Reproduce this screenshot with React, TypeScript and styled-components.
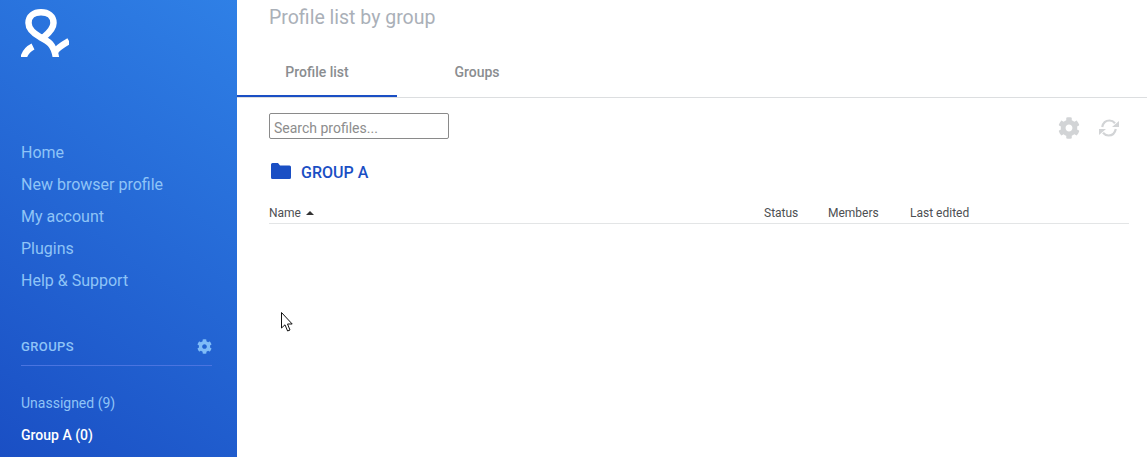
import React from 'react'
import styled, { createGlobalStyle } from 'styled-components'
import { FaCog } from 'react-icons/fa'

const GlobalStyle = createGlobalStyle`
html, body {
    margin: 0;
    height: 100%;
    overflow: hidden;
    background: #fff;
    font-family: Roboto, "Liberation Sans", sans-serif;
}
#root { height: 100%; }
`

const Page = styled.div`
position: relative;
display: flex;
width: 1147px;
height: 457px;
overflow: hidden;
`

const Sidebar = styled.aside`
width: 237px;
flex-shrink: 0;
display: flex;
flex-direction: column;
padding: 9px 25px 0 21px;
box-sizing: border-box;
background: linear-gradient(35deg, #1a4fc4 0%, #2f80e6 100%);
`

const LogoWrap = styled.div`
height: 48px;
margin-bottom: 80px;
svg { display: block; }
`

const NavLink = styled.a`
display: block;
height: 32px;
line-height: 32px;
font-size: 16px;
color: #8fc4f7;
`

const GroupsHead = styled.div`
display: flex;
justify-content: space-between;
align-items: center;
margin-top: 33px;
height: 32px;
padding-bottom: 3px;
border-bottom: 1px solid #4a74e0;
font-size: 13px;
letter-spacing: 0.4px;
font-weight: 500;
color: #8fc4f7;
`

const GroupLink = styled.a<{ $active?: boolean }>`
display: block;
height: 32px;
line-height: 32px;
font-size: 14px;
font-weight: ${p => (p.$active ? 500 : 400)};
color: ${p => (p.$active ? '#fff' : '#8fc4f7')};
`

const GroupList = styled.div`
margin-top: 21px;
`

const Main = styled.main`
flex: 1;
min-width: 0;
`

const Title = styled.h1`
margin: 0;
padding: 6px 0 0 32px;
height: 48px;
box-sizing: border-box;
font-size: 19.5px;
line-height: 24px;
font-weight: 400;
color: #aab0b8;
`

const Tabs = styled.div`
display: flex;
height: 50px;
box-sizing: border-box;
border-bottom: 1px solid #dcdee0;
`

const Tab = styled.div<{ $active?: boolean }>`
width: 160px;
height: 49px;
box-sizing: border-box;
padding-top: 16px;
text-align: center;
font-size: 14px;
line-height: 16px;
font-weight: 500;
color: #8a8d90;
border-bottom: 2px solid ${p => (p.$active ? '#1a4fc4' : 'transparent')};
`

const Content = styled.div`
padding: 15px 18px 0 32px;
`

const Toolbar = styled.div`
display: flex;
justify-content: space-between;
align-items: center;
height: 26px;
`

const SearchInput = styled.input`
width: 180px;
height: 26px;
box-sizing: border-box;
padding: 3px 4px 0;
border: 1px solid #8a8a8a;
border-radius: 2px;
outline: none;
font-family: inherit;
font-size: 14px;
&::placeholder { color: #8d8d8d; opacity: 1; }
`

const Actions = styled.div`
display: flex;
align-items: center;
gap: 19px;
margin-right: 10px;
padding-top: 4px;
color: #d2d4d6;
`

const GroupTitle = styled.div`
display: flex;
align-items: center;
gap: 10px;
margin-top: 21px;
padding-left: 2px;
height: 24px;
font-size: 16px;
font-weight: 500;
color: #1a4fc4;
`

const FolderSvg = styled.svg`
margin-bottom: 2px;
`

const TableHead = styled.div`
display: grid;
grid-template-columns: 495px 64px 82px 1fr;
margin-top: 19px;
height: 20px;
line-height: 20px;
border-bottom: 1px solid #e3e5e6;
font-size: 12px;
color: #4d4f52;
`

const Arrow = styled.span`
display: inline-block;
margin-left: 2px;
vertical-align: 2px;
border-left: 4px solid transparent;
border-right: 4px solid transparent;
border-bottom: 4px solid #333;
`

const Cursor = styled.svg`
position: absolute;
left: 281px;
top: 312px;
`

const Logo = () => (
    <svg width="48" height="48" viewBox="21 9 48 48" fill="none" stroke="#fff" strokeWidth="6.5">
        <path d="M44 37 C50 32 53.5 27 53.5 23 C53.5 16 48 12.3 41 12.3 C34 12.3 28.5 16 28.5 23 C28.5 29 33 33 40 37 C48 41 54 44 56 58" />
        <path d="M23.5 58 C25 52 28 49 33 46.5" />
        <path d="M55 52 C57 48 62 45 69 41" />
    </svg>
)

const FolderIcon = () => (
    <FolderSvg width="20" height="16" viewBox="0 0 20 16" fill="currentColor">
        <path d="M1.5 0 H7 L9 2.5 H18.5 A1.5 1.5 0 0 1 20 4 V14.5 A1.5 1.5 0 0 1 18.5 16 H1.5 A1.5 1.5 0 0 1 0 14.5 V1.5 A1.5 1.5 0 0 1 1.5 0 Z" />
    </FolderSvg>
)

const RefreshIcon = () => (
    <svg width="20" height="18" viewBox="0 0 20 18" fill="none" stroke="currentColor" strokeWidth="2.2">
        <path d="M3.2 8 C4 4 7 1.5 10.5 1.5 C12.8 1.5 14.6 2.5 16 4.2" />
        <path d="M16.8 10 C16 14 13 16.5 9.5 16.5 C7.2 16.5 5.4 15.5 4 13.8" />
        <path d="M13 8 H20 V2 Z" fill="currentColor" stroke="none" />
        <path d="M0 10 H7 L0 16 Z" fill="currentColor" stroke="none" />
    </svg>
)

const App: React.FC = () => {
    const nav = ['Home', 'New browser profile', 'My account', 'Plugins', 'Help & Support']
    return (
        <Page>
            <GlobalStyle />
            <Sidebar>
                <LogoWrap><Logo /></LogoWrap>
                {nav.map(n => <NavLink key={n}>{n}</NavLink>)}
                <GroupsHead>GROUPS <FaCog size={15} color="#7fbcf7" /></GroupsHead>
                <GroupList>
                    <GroupLink>Unassigned (9)</GroupLink>
                    <GroupLink $active>Group A (0)</GroupLink>
                </GroupList>
            </Sidebar>
            <Main>
                <Title>Profile list by group</Title>
                <Tabs>
                    <Tab $active>Profile list</Tab>
                    <Tab>Groups</Tab>
                </Tabs>
                <Content>
                    <Toolbar>
                        <SearchInput placeholder="Search profiles..." />
                        <Actions>
                            <FaCog size={22} />
                            <RefreshIcon />
                        </Actions>
                    </Toolbar>
                    <GroupTitle><FolderIcon />GROUP A</GroupTitle>
                    <TableHead>
                        <div>Name <Arrow /></div>
                        <div>Status</div>
                        <div>Members</div>
                        <div>Last edited</div>
                    </TableHead>
                </Content>
            </Main>
            <Cursor width="14" height="21" viewBox="0 0 14 21">
                <path d="M0.5 0.5 L0.5 16 L4 12.8 L6.6 19 L9 18 L6.5 12 L11.2 12 Z" fill="#fff" stroke="#111" strokeWidth="1" />
            </Cursor>
        </Page>
    )
}

export default App
